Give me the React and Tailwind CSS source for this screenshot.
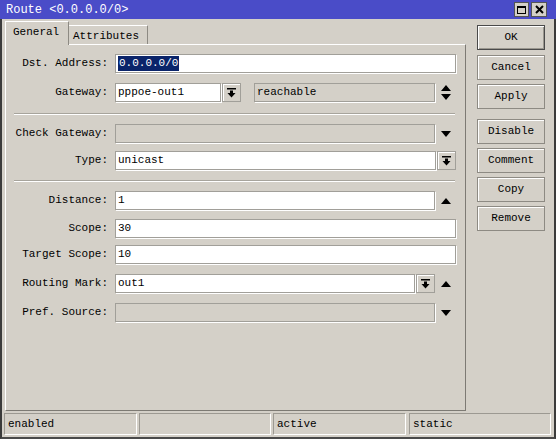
import React from 'react';

// MikroTik-style "Route" dialog, classic Win9x chrome.

const Tri = ({ up }) => (
  <svg width="10" height="6" viewBox="0 0 10 6">
    <path d={up ? 'M0 6L5 0L10 6Z' : 'M0 0L5 6L10 0Z'} fill="#000" />
  </svg>
);

const UpDown = () => (
  <svg width="10" height="15" viewBox="0 0 10 15">
    <path d="M0 6L5 0L10 6Z M0 9L5 15L10 9Z" fill="#000" />
  </svg>
);

const DropIcon = () => (
  <svg width="9" height="10" viewBox="0 0 9 10">
    <rect x="0" y="0" width="9" height="1.5" fill="#000" />
    <rect x="3" y="2.5" width="3" height="3" fill="#000" />
    <path d="M0.5 5H8.5L4.5 9.5Z" fill="#000" />
  </svg>
);

const Field = ({ w, off, children }) => (
  <div
    className={`h-[19px] ${w} shrink-0 border border-[#a19f99] ${
      off ? 'bg-[#d4d0c8]' : 'bg-white'
    } shadow-[1px_1px_0_#fff] flex items-center pl-[2px] overflow-hidden whitespace-nowrap`}
  >
    {children}
  </div>
);

const DropBtn = ({ ml }) => (
  <div
    className={`h-[19px] w-[19px] ${ml} shrink-0 bg-[#d4d0c8] border border-[#a19f99] shadow-[inset_1px_1px_0_#fff] flex items-center justify-center`}
  >
    <DropIcon />
  </div>
);

const Slot = ({ children }) => (
  <div className="w-[21px] h-[19px] shrink-0 flex items-center justify-center">{children}</div>
);

const Row = ({ label, mt, children }) => (
  <div className={`flex items-center h-[19px] ${mt}`}>
    <div className="w-[102px] shrink-0 text-right whitespace-nowrap">{label}</div>
    <div className="ml-[7px] flex items-center">{children}</div>
  </div>
);

const Sep = ({ mt }) => (
  <div className={`ml-[8px] w-[441px] h-[2px] border-t border-[#a7a49c] border-b border-b-white ${mt}`} />
);

const Btn = ({ label, mt, main }) => (
  <div
    className={`h-[25px] w-[68px] ${mt} flex items-center justify-center bg-[#d4d0c8] ${
      main
        ? 'border border-[#4a4a4a] shadow-[inset_1px_1px_0_#fff,inset_-1px_-1px_0_#9a978f]'
        : 'border border-[#8d8a83] shadow-[inset_1px_1px_0_#fff]'
    }`}
  >
    {label}
  </div>
);

const Cell = ({ w, ml, children }) => (
  <div
    className={`h-[22px] ${w} ${ml} border border-[#9c9992] border-b-white border-r-white flex items-center pl-[3px]`}
  >
    {children}
  </div>
);

export default function App() {
  return (
    <div className="w-[556px] h-[439px] bg-[#d4d0c8] flex flex-col font-['Liberation_Mono',monospace] text-[11px] text-black leading-none overflow-hidden">
      {/* title bar */}
      <div className="h-[19px] shrink-0 bg-[#4a4cc8] flex items-center pl-[6px] pr-[9px]">
        <span className="text-white text-[12px]">Route &lt;0.0.0.0/0&gt;</span>
        <div className="ml-auto flex gap-[2px]">
          <div className="w-[15px] h-[15px] bg-[#d4d0c8] border border-[#555] flex items-center justify-center">
            <div className="w-[9px] h-[8px] border border-black border-t-2" />
          </div>
          <div className="w-[16px] h-[15px] bg-[#d4d0c8] border border-[#555] flex items-center justify-center">
            <svg width="9" height="9" viewBox="0 0 9 9">
              <path d="M1 1L8 8M8 1L1 8" stroke="#000" strokeWidth="2" />
            </svg>
          </div>
        </div>
      </div>

      <div className="flex-1 flex flex-col border-x-2 border-[#3b3b3b] border-b-2 border-b-[#4a4a4a]">
        <div className="flex">
          {/* tabs + form panel */}
          <div className="ml-[3px] mt-[2px] w-[461px] flex flex-col">
            <div className="h-[23px] flex items-end">
              <div className="relative z-10 -mb-px h-[24px] w-[64px] bg-[#d4d0c8] border-t border-l border-white border-r border-r-[#8d8a83] flex items-center pl-[7px] pb-[2px]">
                General
              </div>
              <div className="h-[19px] w-[79px] border-t border-white border-r border-r-[#8d8a83] flex items-center pl-[4px] pt-[2px]">
                Attributes
              </div>
            </div>
            <div className="h-[367px] border border-white border-r-[#7d7a74] border-b-[#7d7a74] pt-[9px]">
              <Row label="Dst. Address:">
                <Field w="w-[341px]">
                  <span className="bg-[#0a246a] text-white px-[1px] py-[2px]">0.0.0.0/0</span>
                </Field>
              </Row>
              <Row label="Gateway:" mt="mt-[10px]">
                <Field w="w-[106px]">pppoe-out1</Field>
                <DropBtn ml="ml-[1px]" />
                <div className="ml-[13px]">
                  <Field w="w-[181px]" off>
                    reachable
                  </Field>
                </div>
                <Slot>
                  <UpDown />
                </Slot>
              </Row>
              <Sep mt="mt-[11px]" />
              <Row label="Check Gateway:" mt="mt-[9px]">
                <Field w="w-[320px]" off />
                <Slot>
                  <Tri />
                </Slot>
              </Row>
              <Row label="Type:" mt="mt-[8px]">
                <Field w="w-[321px]">unicast</Field>
                <DropBtn ml="ml-[1px]" />
              </Row>
              <Sep mt="mt-[10px]" />
              <Row label="Distance:" mt="mt-[9px]">
                <Field w="w-[320px]">1</Field>
                <Slot>
                  <Tri up />
                </Slot>
              </Row>
              <Row label="Scope:" mt="mt-[9px]">
                <Field w="w-[341px]">30</Field>
              </Row>
              <Row label="Target Scope:" mt="mt-[7px]">
                <Field w="w-[341px]">10</Field>
              </Row>
              <Row label="Routing Mark:" mt="mt-[10px]">
                <Field w="w-[300px]">out1</Field>
                <DropBtn ml="ml-[1px]" />
                <Slot>
                  <Tri up />
                </Slot>
              </Row>
              <Row label="Pref. Source:" mt="mt-[10px]">
                <Field w="w-[320px]" off />
                <Slot>
                  <Tri />
                </Slot>
              </Row>
            </div>
          </div>

          {/* action buttons */}
          <div className="ml-[11px] mt-[6px] flex flex-col">
            <Btn label="OK" main />
            <Btn label="Cancel" mt="mt-[5px]" />
            <Btn label="Apply" mt="mt-[4px]" />
            <Btn label="Disable" mt="mt-[10px]" />
            <Btn label="Comment" mt="mt-[4px]" />
            <Btn label="Copy" mt="mt-[4px]" />
            <Btn label="Remove" mt="mt-[4px]" />
          </div>
        </div>

        {/* status bar */}
        <div className="mt-[2px] flex pl-[2px]">
          <Cell w="w-[133px]">enabled</Cell>
          <Cell w="w-[132px]" ml="ml-[2px]" />
          <Cell w="w-[133px]" ml="ml-[2px]">active</Cell>
          <Cell w="w-[142px]" ml="ml-[3px]">static</Cell>
        </div>
      </div>
    </div>
  );
}
